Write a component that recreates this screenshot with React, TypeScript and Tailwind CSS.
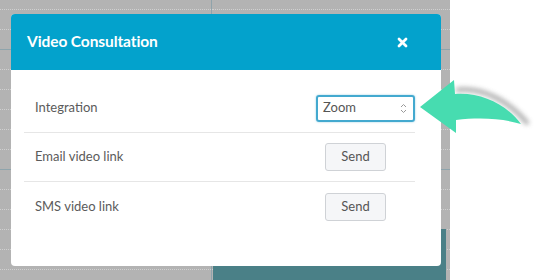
import React from "react";

const slots = Array.from({ length: 14 }, (_, i) => i);

const Row = ({ label, children, last }: { label: string; children: React.ReactNode; last?: boolean }) => (
  <div className={`flex items-center justify-between h-[49px] pl-[11px] ${last ? "" : "border-b border-[#e6e6e6]"}`}>
    <span className="text-[13px] text-[#5b5b5b]">{label}</span>
    {children}
  </div>
);

const SendButton = () => (
  <button className="w-[61px] h-[28px] mr-[29px] rounded-[3px] border border-[#cfd2d6] bg-[#f5f6f8] text-[13px] text-[#555]">
    Send
  </button>
);

export default function App() {
  return (
    <div className="relative w-[538px] h-[280px] overflow-hidden bg-white flex font-['Lato','Liberation_Sans',sans-serif]">
      {/* calendar behind the dialog */}
      <div className="relative w-[450px] h-full bg-[#b3b3b3] flex">
        <div className="w-[212px] h-full border-r border-[#8fa3ab] flex flex-col pt-[9px]">
          {slots.map((i) => (
            <div
              key={i}
              className={`h-[20px] shrink-0 border-t ${i === 2 || i === 8 ? "border-solid border-[#8ea4ac]" : "border-dotted border-[#d0d0d0]"}`}
            />
          ))}
        </div>
        <div className="flex-1 h-full flex flex-col pt-[9px]">
          {slots.map((i) => (
            <div
              key={i}
              className={`h-[20px] shrink-0 border-t ${i === 2 || i === 8 ? "border-solid border-[#8ea4ac]" : "border-dotted border-[#d0d0d0]"}`}
            />
          ))}
        </div>
        <div className="absolute left-[213px] top-[229px] w-[233px] h-[60px] bg-[#4a8087]" />
      </div>

      {/* dialog */}
      <div className="absolute left-[11px] top-[14px] w-[430px] h-[252px] bg-white rounded-[4px] overflow-hidden flex flex-col">
        <div className="h-[56px] bg-[#03a2cc] flex items-center justify-between pl-[16px] pr-[33px]">
          <h2 className="text-[15.5px] font-bold text-white tracking-[-0.1px]">Video Consultation</h2>
          <svg width="11" height="11" viewBox="0 0 11 11">
            <path d="M2 2 L9 9 M9 2 L2 9" stroke="white" strokeWidth="2.8" strokeLinecap="round" />
          </svg>
        </div>
        <div className="pt-[14px] pl-[13px] pr-[26px]">
          <Row label="Integration">
            <div className="w-[99px] h-[27px] border-2 border-[#43a9cf] rounded-[3px] flex items-center justify-between pl-[5px] pr-[6px] shadow-[0_0_2px_rgba(67,169,207,0.6)]">
              <span className="text-[13px] text-[#555]">Zoom</span>
              <svg width="7" height="11" viewBox="0 0 7 11">
                <path d="M1 4 L3.5 1.5 L6 4 M1 7 L3.5 9.5 L6 7" fill="none" stroke="#9a9a9a" strokeWidth="1" />
              </svg>
            </div>
          </Row>
          <Row label="Email video link">
            <SendButton />
          </Row>
          <Row label="SMS video link" last>
            <SendButton />
          </Row>
        </div>
      </div>

      {/* pointing arrow */}
      <svg className="absolute left-[410px] top-[70px]" width="128" height="75" viewBox="410 70 128 75">
        <defs>
          <filter id="sh" x="-20%" y="-40%" width="140%" height="180%">
            <feGaussianBlur stdDeviation="2.5" />
          </filter>
        </defs>
        <path d="M456 90 C484 87 510 102 528 124" fill="none" stroke="#8c8c8c" strokeWidth="4" filter="url(#sh)" opacity="0.8" />
        <path
          d="M420 107 L454 80 L455 94 C481 92 506 104 521 124 C505 119 482 117 456 120 L456 133 Z"
          fill="#47dcb0"
        />
      </svg>
    </div>
  );
}
